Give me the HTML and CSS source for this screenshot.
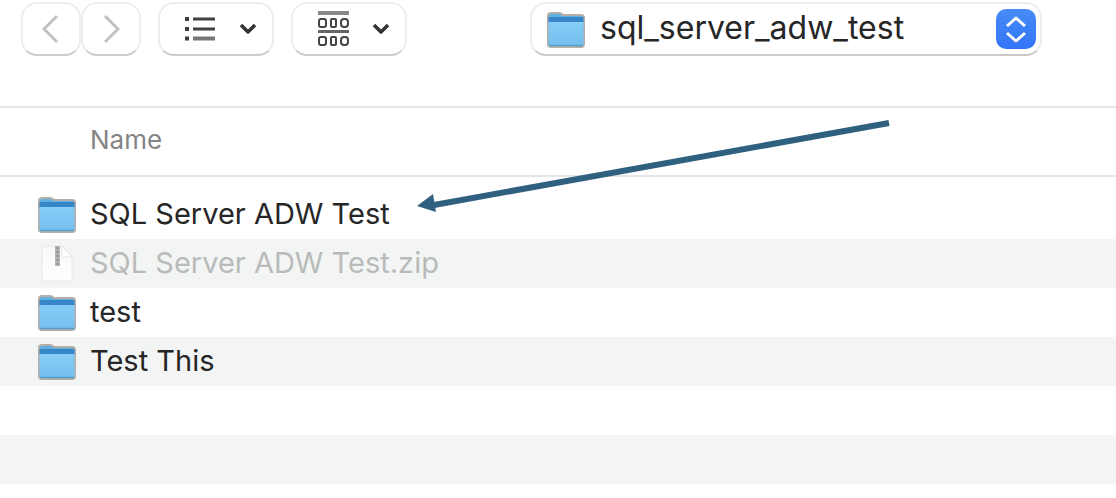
FILE: index.html
```html
<!DOCTYPE html>
<html lang="en">
<head>
<meta charset="utf-8">
<title>Open</title>
<link rel="stylesheet" href="styles.css">
</head>
<body>
<svg width="0" height="0" class="defs" aria-hidden="true">
  <defs>
    <linearGradient id="front" x1="0" y1="0" x2="0" y2="1">
      <stop offset="0" stop-color="#86cdf8"/>
      <stop offset="1" stop-color="#74bfee"/>
    </linearGradient>
    <linearGradient id="paper" x1="0" y1="0" x2="0" y2="1">
      <stop offset="0" stop-color="#f8f8f8"/>
      <stop offset="1" stop-color="#ffffff"/>
    </linearGradient>
    <symbol id="folder" viewBox="0 0 40 38">
      <path d="M2 5Q2 2 5 2H13Q15 2 17 4H35Q38 4 38 7V33Q38 36 35 36H5Q2 36 2 33Z" fill="#5eafe2" stroke="#b5aea8" stroke-width="2"/>
      <path d="M2.500 6H37.500V12H2.500Z" fill="#3686c8"/>
      <path d="M2.500 11H37.500V33Q37.500 35 36 35H4Q2.500 35 2.500 33Z" fill="url(#front)"/>
      <path d="M3 34.500H37" stroke="#559fc9" stroke-width="1.500"/>
    </symbol>
    <symbol id="zip" viewBox="0 0 40 38">
      <path d="M8 1H25L35 12V34Q35 36 33 36H7Q5 36 5 34V4Q5 1 8 1Z" fill="url(#paper)" stroke="#e6e8e7" stroke-width="1"/>
      <path d="M25 1V10Q25 12 27 12H35Z" fill="#fff" stroke="#e3e5e4" stroke-width="1"/>
      <path d="M20.500 1V21" stroke="#b4b4b4" stroke-width="5"/>
      <path d="M20.500 2V21" stroke="#8f8f8f" stroke-width="2" stroke-dasharray="2 2"/>
    </symbol>
    <symbol id="down" viewBox="0 0 20 12">
      <path d="M3 2L10 9L17 2" fill="none" stroke="#333" stroke-width="3.500" stroke-linejoin="round"/>
    </symbol>
  </defs>
</svg>

<header class="toolbar">
  <div class="history">
    <button class="control nav" type="button" aria-label="Back" disabled>
      <svg width="18" height="30" viewBox="0 0 18 30"><path d="M15 2L2 15L15 28" /></svg>
    </button>
    <button class="control nav" type="button" aria-label="Forward" disabled>
      <svg width="18" height="30" viewBox="0 0 18 30"><path d="M3 2L16 15L3 28" /></svg>
    </button>
  </div>
  <button class="control view" type="button" aria-label="List view">
    <svg width="32" height="28" viewBox="0 0 32 28" fill="none" stroke="#404040" stroke-width="3">
      <path d="M1 4H5M1 14H5M1 23.500H5" stroke-width="4"/>
      <path d="M9 4H31M9 14H31"/>
      <path d="M9 23.500H31" stroke="#777" stroke-width="4"/>
    </svg>
    <svg width="20" height="12"><use href="#down"/></svg>
  </button>
  <button class="control view" type="button" aria-label="Group items">
    <svg width="34" height="36" viewBox="0 0 34 36" fill="none" stroke="#444" stroke-width="2">
      <path d="M1 2H32" stroke="#888" stroke-width="4"/>
      <path d="M1 20.500H32" stroke="#666" stroke-width="3"/>
      <rect x="2" y="8" width="7" height="8" rx="2"/><rect x="14" y="8" width="5" height="8" rx="1"/><rect x="24" y="8" width="7" height="8" rx="3"/>
      <rect x="2" y="26" width="7" height="8" rx="2"/><rect x="14" y="26" width="5" height="8" rx="1"/><rect x="24" y="26" width="7" height="8" rx="3"/>
    </svg>
    <svg width="20" height="12"><use href="#down"/></svg>
  </button>
  <div class="location">
    <svg class="location-icon" width="40" height="38"><use href="#folder"/></svg>
    <select class="control location-select" aria-label="Location">
      <option>sql_server_adw_test</option>
    </select>
    <span class="stepper">
      <svg width="22" height="30" viewBox="0 0 22 30" fill="none" stroke="#fff" stroke-width="3" stroke-linejoin="round"><path d="M2 12L11 4L20 12M2 19L11 27L20 19"/></svg>
    </span>
  </div>
</header>

<main class="browser">
  <table class="files">
    <thead>
      <tr><th scope="col">Name</th></tr>
    </thead>
    <tbody>
      <tr><td><div class="file"><svg width="40" height="38"><use href="#folder"/></svg><span class="name">SQL Server ADW Test</span></div></td></tr>
      <tr><td><div class="file unavailable"><svg width="40" height="38"><use href="#zip"/></svg><span class="name">SQL Server ADW Test.zip</span></div></td></tr>
      <tr><td><div class="file"><svg width="40" height="38"><use href="#folder"/></svg><span class="name">test</span></div></td></tr>
      <tr><td><div class="file"><svg width="40" height="38"><use href="#folder"/></svg><span class="name">Test This</span></div></td></tr>
      <tr><td><div class="file"></div></td></tr>
      <tr><td><div class="file"></div></td></tr>
    </tbody>
  </table>
  <svg class="pointer" width="474" height="96" viewBox="0 0 474 96" aria-hidden="true">
    <path d="M473 5L18 87" stroke="#2f6080" stroke-width="6"/>
    <path d="M1 88L17 76L20 94Z" fill="#2f6080"/>
  </svg>
</main>
</body>
</html>
```
FILE: styles.css
```css
* {
  box-sizing: border-box;
}

body {
  margin: 0;
  background: #fff;
  color: #262626;
  font-family: Inter, "Liberation Sans", sans-serif;
  font-size: 29px;
}

svg {
  display: block;
  flex: none;
}

.defs {
  position: absolute;
}

.toolbar {
  display: flex;
  align-items: center;
  gap: 17px;
  padding: 2px 21px 50px;
}

.history {
  display: flex;
}

.control {
  height: 54px;
  border: 2px solid #ededed;
  border-bottom-color: #cbcbcb;
  border-radius: 16px;
  background: #fff;
  color: inherit;
  font: inherit;
}

.nav {
  display: flex;
  align-items: center;
  justify-content: center;
  width: 60px;
  padding: 0;
}

.nav path {
  fill: none;
  stroke: #c2c2c2;
  stroke-width: 3;
}

.view {
  display: flex;
  align-items: center;
  justify-content: space-between;
  width: 116px;
  padding: 0 14px 0 24px;
}

.location {
  position: relative;
  width: 512px;
  margin-left: 106px;
}

.location-select {
  display: block;
  width: 100%;
  padding: 0 60px 3px 68px;
  font-size: 32px;
  appearance: none;
}

.location-icon {
  position: absolute;
  top: 9px;
  left: 16px;
  pointer-events: none;
}

.stepper {
  position: absolute;
  top: 7px;
  right: 6px;
  display: flex;
  align-items: center;
  justify-content: center;
  width: 40px;
  height: 40px;
  border-radius: 10px;
  background: linear-gradient(#478cf7, #3275f6);
  pointer-events: none;
}

.browser {
  position: relative;
}

.files {
  width: 100%;
  border-collapse: separate;
  border-spacing: 0;
}

.files th {
  height: 71px;
  padding: 0 0 4px 90px;
  border-top: 2px solid #e6e6e6;
  border-bottom: 2px solid #e6e6e6;
  color: #848484;
  font-size: 26px;
  font-weight: 400;
  text-align: left;
}

.files tbody::before {
  content: "";
  display: block;
  height: 13px;
}

.files td {
  padding: 0;
}

.files tbody tr:nth-child(even) {
  background: #f3f5f4;
}

.file {
  display: flex;
  align-items: center;
  gap: 13px;
  height: 49px;
  padding-left: 37px;
}

.name {
  padding-bottom: 3px;
}

.unavailable {
  color: #b9bbba;
}

.pointer {
  position: absolute;
  top: 12px;
  left: 416px;
}
```
